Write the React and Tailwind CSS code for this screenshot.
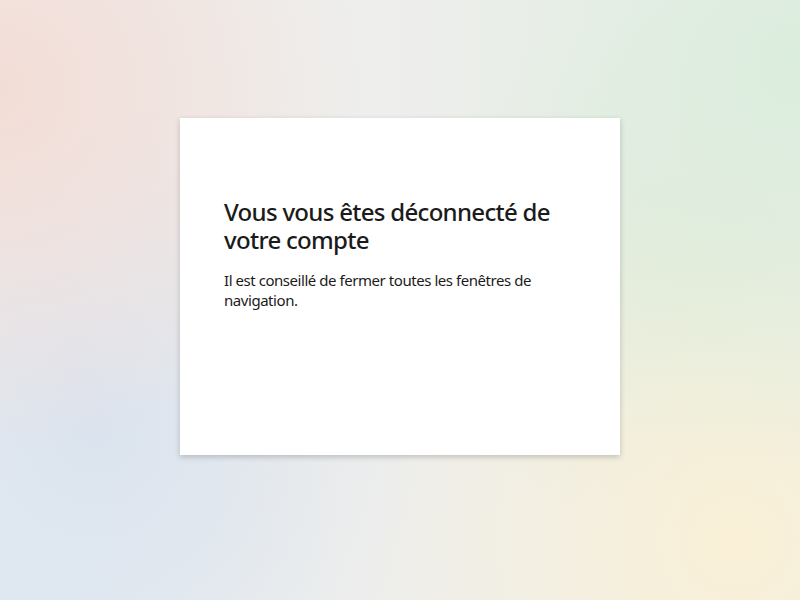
export default function App() {
  return (
    <div className="min-h-screen w-full flex items-start justify-center bg-[#eeeeec] bg-[radial-gradient(circle_at_0%_15%,#f3dcd6_0,transparent_38%),radial-gradient(circle_at_100%_10%,#dbeddd_0,transparent_42%),radial-gradient(circle_at_12%_72%,#dbe3ee_0,transparent_40%),radial-gradient(circle_at_0%_100%,#e2ecf5_0,transparent_35%),radial-gradient(circle_at_92%_90%,#f9f0d6_0,transparent_40%),radial-gradient(circle_at_85%_45%,#e3ecdc_0,transparent_35%)] font-['Segoe_UI','Noto_Sans','Open_Sans',sans-serif]">
      <div className="mt-[118px] w-[440px] min-h-[337px] bg-white shadow-[0_2px_6px_rgba(0,0,0,0.2)] px-[44px] pt-[80px] pb-[44px]">
        <h1 className="text-[24px] leading-[28px] font-medium tracking-[-0.7px] text-[#1b1b1b]">
          Vous vous êtes déconnecté de votre compte
        </h1>
        <p className="mt-[16px] text-[15px] leading-[20px] tracking-[-0.45px] text-[#1b1b1b]">
          Il est conseillé de fermer toutes les fenêtres de navigation.
        </p>
      </div>
    </div>
  );
}
